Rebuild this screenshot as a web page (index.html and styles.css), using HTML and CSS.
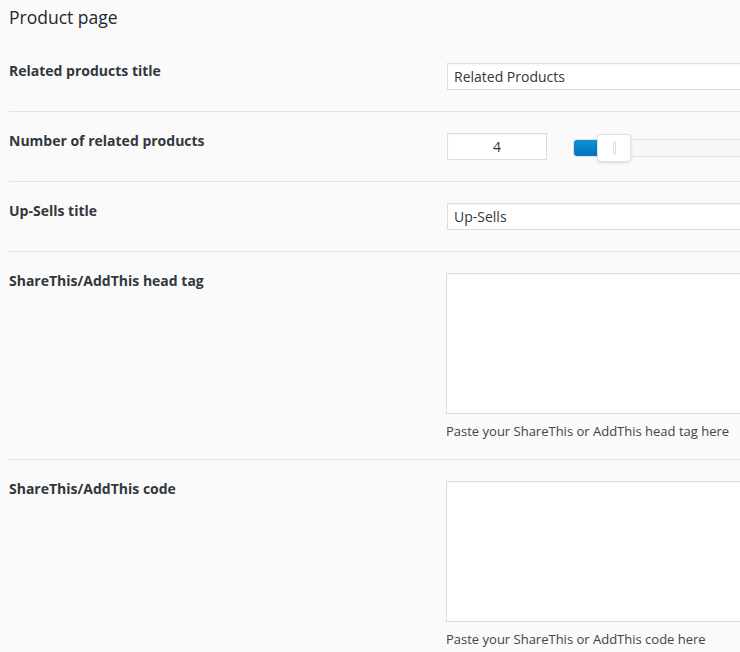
FILE: index.html
```html
<!DOCTYPE html>
<html>
<head>
<meta charset="utf-8">
<link rel="stylesheet" href="styles.css">
</head>
<body>
<div class="page">
  <h2 class="title">Product page</h2>
  <div class="table">
    <div class="row">
      <div class="label">Related products title</div>
      <div class="field"><div class="input">Related Products</div></div>
    </div>
    <div class="row">
      <div class="label">Number of related products</div>
      <div class="field slider-field">
        <div class="input num">4</div>
        <div class="slider">
          <div class="fill"></div>
          <div class="handle"><span class="grip"></span><span class="grip"></span></div>
        </div>
      </div>
    </div>
    <div class="row">
      <div class="label">Up-Sells title</div>
      <div class="field"><div class="input">Up-Sells</div></div>
    </div>
    <div class="row">
      <div class="label">ShareThis/AddThis head tag</div>
      <div class="field">
        <div class="textarea"></div>
        <p class="desc">Paste your ShareThis or AddThis head tag here</p>
      </div>
    </div>
    <div class="row">
      <div class="label">ShareThis/AddThis code</div>
      <div class="field">
        <div class="textarea"></div>
        <p class="desc">Paste your ShareThis or AddThis code here</p>
      </div>
    </div>
  </div>
</div>
</body>
</html>
```
FILE: styles.css
```css
html, body {
  margin: 0;
  padding: 0;
  background: #fafafa;
  overflow: hidden;
}
body {
  font-family: "Open Sans", "Liberation Sans", sans-serif;
  color: #444;
}
.page {
  width: 1000px;
  padding-left: 9px;
}
.title {
  margin: 0 0 14px;
  padding-top: 6px;
  font-size: 17.5px;
  line-height: 22px;
  font-weight: 400;
  color: #23282d;
}
.row {
  display: grid;
  grid-template-columns: 438px 1fr;
  padding: 21px 0 21px;
  border-bottom: 1px solid #e3e3e3;
}
.label {
  margin-top: -2px;
  font-size: 14px;
  font-weight: 700;
  line-height: 20px;
  color: #32373c;
}
.field {
  display: flex;
  flex-direction: column;
  align-items: flex-start;
}
.input {
  box-sizing: border-box;
  width: 420px;
  height: 27px;
  background: #fff;
  border: 1px solid #ddd;
  box-shadow: inset 0 1px 2px rgba(0,0,0,0.04);
  font-size: 14px;
  line-height: 25px;
  padding: 0 6px;
  color: #32373c;
}
.slider-field {
  flex-direction: row;
  align-items: center;
}
.input.num {
  width: 100px;
  text-align: center;
}
.slider {
  position: relative;
  margin-left: 26px;
  margin-top: 3px;
  width: 300px;
  height: 18px;
  box-sizing: border-box;
  border: 1px solid #e0e0e0;
  border-radius: 4px;
  background: #f7f7f7;
}
.fill {
  width: 30px;
  height: 16px;
  border-radius: 3px 0 0 3px;
  background: linear-gradient(#0e8fd6, #0076bf);
}
.handle {
  position: absolute;
  left: 23px;
  top: -6px;
  box-sizing: border-box;
  width: 34px;
  height: 28px;
  background: #fff;
  border: 1px solid #e2e2e2;
  border-radius: 4px;
  box-shadow: 0 1px 3px rgba(0,0,0,0.12);
  display: flex;
  justify-content: center;
  align-items: center;
  gap: 1px;
}
.grip {
  width: 1px;
  height: 14px;
  background: #ddd;
}
.textarea {
  box-sizing: border-box;
  width: 420px;
  height: 141px;
  margin-left: -1px;
  background: #fff;
  border: 1px solid #ddd;
  box-shadow: inset 0 1px 2px rgba(0,0,0,0.04);
}
.desc {
  margin: 8px 0 -2px -1px;
  font-size: 13px;
  line-height: 18px;
  color: #444;
}
```
